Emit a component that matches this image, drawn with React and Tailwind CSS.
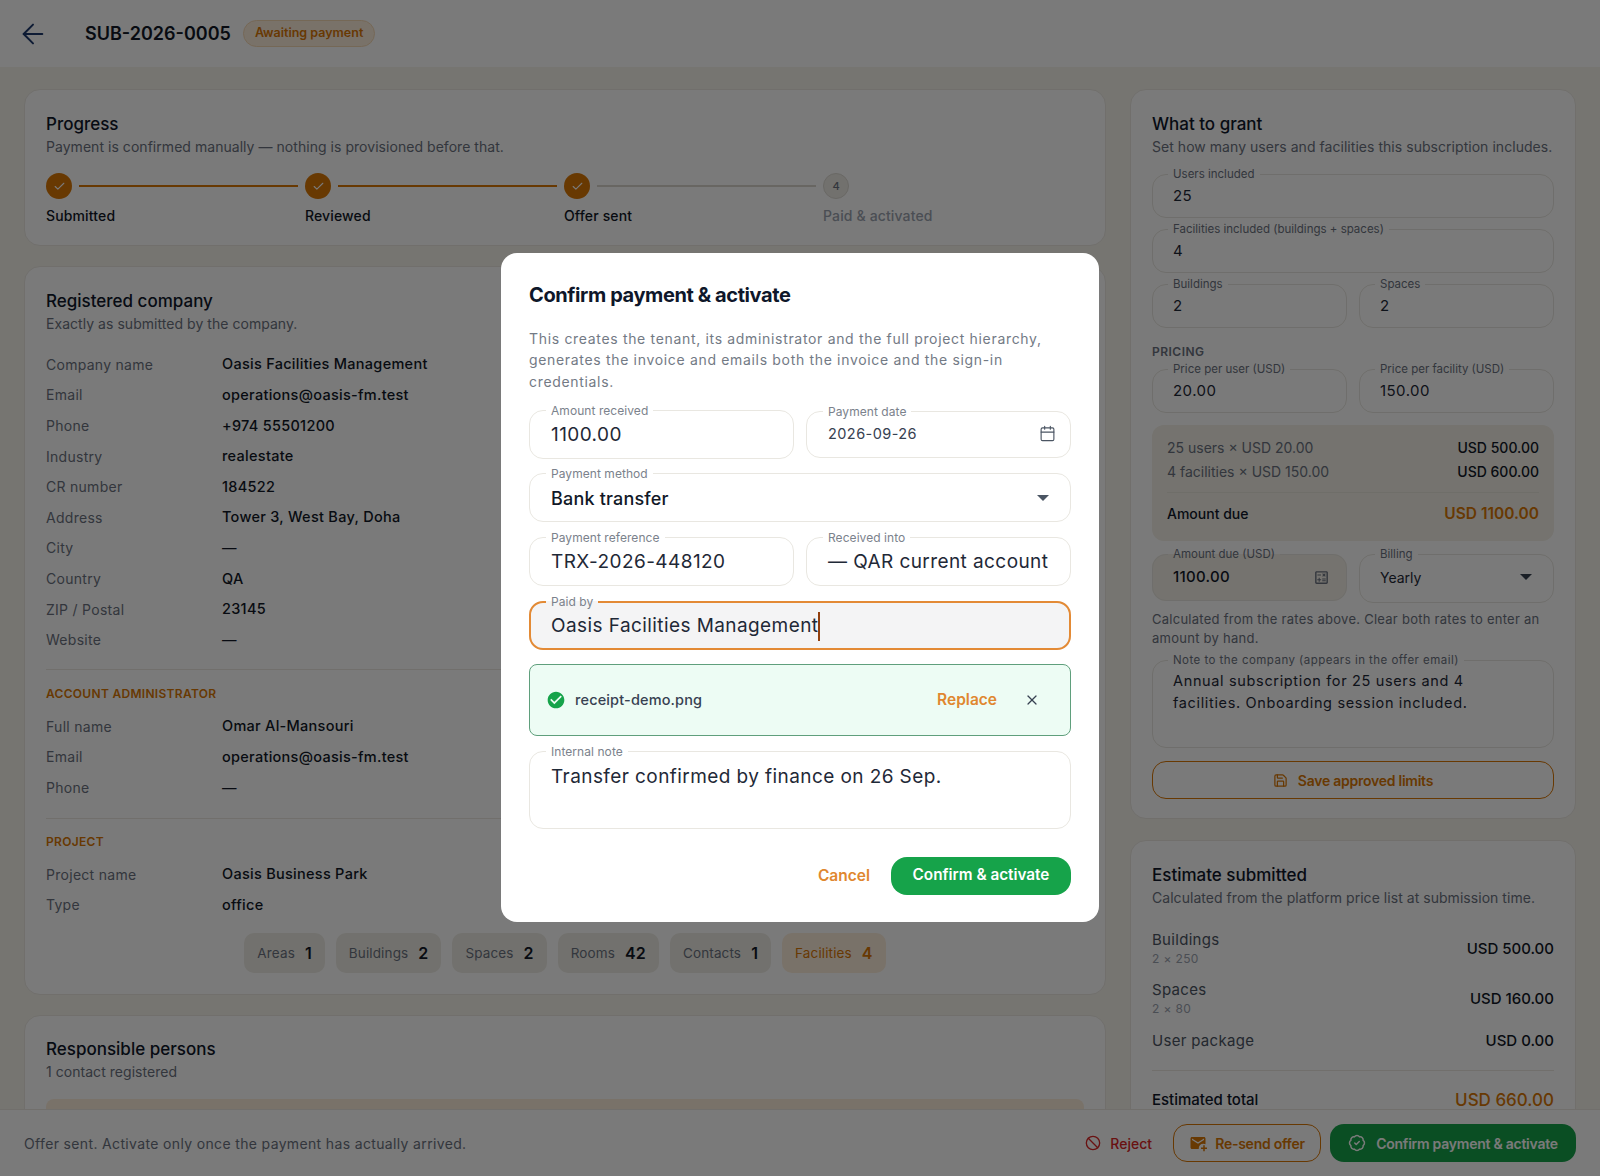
import { ArrowLeft, Ban, BadgeCheck, Calendar, Check, Save, X } from "lucide-react";

const Field = ({ label, children, dim, className = "", legendClass = "" }) => (
  <fieldset className={`border rounded-[14px] min-w-0 pr-[16px] border-[#e9e7e1] ${dim ? "pl-[20px]" : "pl-[21px]"} ${className}`}>
    <legend
      className={`px-[5px] -ml-[5px] leading-none ${dim ? "text-[11.5px] text-[#6b7280]" : "text-[12px] text-[#7b828c] tracking-[0.005em]"} ${legendClass}`}
    >
      {label}
    </legend>
    {children}
  </fieldset>
);

const Caret = ({ className }) => (
  <svg viewBox="0 0 12 6" className={className} fill="currentColor">
    <path d="M0 0h12L6 6z" />
  </svg>
);

const Row = ({ label, value }) => (
  <div className="flex items-center h-[30.6px] text-[14px] tracking-[0.02em]">
    <span className="w-[176px] text-[#6b7280]">{label}</span>
    <span className="text-[14.5px] font-medium text-[#111827]">{value}</span>
  </div>
);

const Card = ({ className = "", children }) => (
  <section className={`rounded-[16px] border border-[#ece9e2] bg-white px-[21px] ${className}`}>{children}</section>
);

const CardHead = ({ title, sub }) => (
  <>
    <h2 className="text-[17px] leading-[22px] font-medium text-[#0f172a]">{title}</h2>
    <p className="text-[14px] leading-[24px] tracking-[0.003em] whitespace-nowrap text-[#6b7280]">{sub}</p>
  </>
);

const Step = ({ n, label, done, last }) => (
  <div className={last ? "" : "w-[259px]"}>
    <div className="flex items-center">
      {done ? (
        <span className="w-[26px] h-[26px] rounded-full bg-[#d97706] flex items-center justify-center text-white">
          <Check className="w-[13px] h-[13px]" strokeWidth={2} />
        </span>
      ) : (
        <span className="w-[26px] h-[26px] rounded-full border border-[#dcd9d2] bg-[#eeece6] flex items-center justify-center text-[11px] font-medium text-[#6b7280]">
          {n}
        </span>
      )}
      {!last && <span className={`ml-[7px] h-[2px] w-[219px] ${done && n < 3 ? "bg-[#d97706]" : "bg-[#d9d6ce]"}`} />}
    </div>
    <div className={`mt-[6px] text-[14px] leading-[21px] font-medium tracking-[0.01em] ${done ? "text-[#111827]" : "text-[#9ca3af]"}`}>{label}</div>
  </div>
);

const Chip = ({ label, n, active }) => (
  <div className={`h-[40px] px-[13px] rounded-[10px] flex items-center gap-[10px] text-[13.5px] tracking-[0.01em] ${active ? "bg-[#fdeedc] text-[#d97706]" : "bg-[#efede6] text-[#6b7280]"}`}>
    <span>{label}</span>
    <span className={`text-[16px] font-semibold ${active ? "text-[#d97706]" : "text-[#111827]"}`}>{n}</span>
  </div>
);

const Price = ({ label, sub, value }) => (
  <div className="flex justify-between items-center">
    <div>
      <div className="text-[15px] leading-[20px] tracking-[0.02em] text-[#4b5563]">{label}</div>
      {sub && <div className="text-[12px] leading-[18px] tracking-[0.03em] text-[#9ca3af]">{sub}</div>}
    </div>
    <div className="text-[15px] font-medium text-[#111827]">{value}</div>
  </div>
);

const SectionLabel = ({ children }) => (
  <div className="text-[12px] leading-[18px] font-semibold tracking-[0.025em] text-[#d97706]">{children}</div>
);

const DimValue = ({ children }) => (
  <div className="text-[15px] leading-[29px] tracking-[0.03em] text-[#1f2937]">{children}</div>
);

const ModalValue = ({ children }) => (
  <div className="text-[19px] leading-[35px] tracking-[0.022em] text-[#1f2937] whitespace-nowrap">{children}</div>
);

export default function App() {
  return (
    <div className="relative h-[1176px] overflow-hidden bg-[#f6f4ed] font-['Inter',sans-serif]">
      <header className="h-[67px] bg-white flex items-center pl-[17px]">
        <ArrowLeft className="w-[32px] h-[32px] text-[#1e3a6e]" strokeWidth={1.5} />
        <h1 className="ml-[36px] text-[18px] font-semibold text-[#111827]">SUB-2026-0005</h1>
        <span className="ml-[12px] -mt-[1px] h-[27px] px-[11px] rounded-full border border-[#f5d9b5] bg-[#fdeedc] flex items-center text-[12.5px] font-semibold text-[#d97706]">
          Awaiting payment
        </span>
      </header>

      <div className="flex gap-[24px] px-[24px] pt-[22px]">
        <main className="w-[1082px] flex flex-col gap-[20px]">
          <Card className="h-[157px] pt-[23px]">
            <CardHead title="Progress" sub="Payment is confirmed manually — nothing is provisioned before that." />
            <div className="flex mt-[14px]">
              <Step n={1} label="Submitted" done />
              <Step n={2} label="Reviewed" done />
              <Step n={3} label="Offer sent" done />
              <Step n={4} label="Paid & activated" last />
            </div>
          </Card>

          <Card className="h-[729px] pt-[23px]">
            <CardHead title="Registered company" sub="Exactly as submitted by the company." />
            <div className="mt-[13px]">
              <Row label="Company name" value="Oasis Facilities Management" />
              <Row label="Email" value="operations@oasis-fm.test" />
              <Row label="Phone" value="+974 55501200" />
              <Row label="Industry" value="realestate" />
              <Row label="CR number" value="184522" />
              <Row label="Address" value="Tower 3, West Bay, Doha" />
              <Row label="City" value="—" />
              <Row label="Country" value="QA" />
              <Row label="ZIP / Postal" value="23145" />
              <Row label="Website" value="—" />
            </div>
            <div className="mt-[14px] border-t border-[#ece9e2] pt-[15px]">
              <SectionLabel>ACCOUNT ADMINISTRATOR</SectionLabel>
              <div className="mt-[8px]">
                <Row label="Full name" value="Omar Al-Mansouri" />
                <Row label="Email" value="operations@oasis-fm.test" />
                <Row label="Phone" value="—" />
              </div>
            </div>
            <div className="mt-[15px] border-t border-[#ece9e2] pt-[14px]">
              <SectionLabel>PROJECT</SectionLabel>
              <div className="mt-[8px]">
                <Row label="Project name" value="Oasis Business Park" />
                <Row label="Type" value="office" />
              </div>
            </div>
            <div className="mt-[13px] flex justify-center gap-[11px]">
              <Chip label="Areas" n="1" />
              <Chip label="Buildings" n="2" />
              <Chip label="Spaces" n="2" />
              <Chip label="Rooms" n="42" />
              <Chip label="Contacts" n="1" />
              <Chip label="Facilities" n="4" active />
            </div>
          </Card>

          <Card className="h-[200px] pt-[22px]">
            <CardHead title="Responsible persons" sub="1 contact registered" />
            <div className="mt-[15px] h-[40px] bg-[#fdeedc] rounded-t-[8px]" />
          </Card>
        </main>

        <aside className="w-[446px] flex flex-col gap-[21px]">
          <Card className="h-[730px] pt-[23px]">
            <CardHead title="What to grant" sub="Set how many users and facilities this subscription includes." />
            <div className="mt-[10px] flex flex-col gap-[6px]">
              <Field dim label="Users included" className="h-[49px]">
                <DimValue>25</DimValue>
              </Field>
              <Field dim label="Facilities included (buildings + spaces)" className="h-[49px]">
                <DimValue>4</DimValue>
              </Field>
              <div className="grid grid-cols-2 gap-[12px]">
                <Field dim label="Buildings" className="h-[49px]">
                  <DimValue>2</DimValue>
                </Field>
                <Field dim label="Spaces" className="h-[49px]">
                  <DimValue>2</DimValue>
                </Field>
              </div>
            </div>
            <div className="mt-[15px] mb-[3px] text-[12px] leading-[18px] font-semibold tracking-[0.04em] text-[#6b7280]">PRICING</div>
            <div className="grid grid-cols-2 gap-[12px]">
              <Field dim label="Price per user (USD)" className="h-[49px]">
                <DimValue>20.00</DimValue>
              </Field>
              <Field dim label="Price per facility (USD)" className="h-[49px]">
                <DimValue>150.00</DimValue>
              </Field>
            </div>
            <div className="mt-[12px] h-[116px] rounded-[12px] bg-[#f4f1e8] px-[15px] pt-[11px]">
              <div className="flex justify-between text-[14px] leading-[24px]">
                <span className="text-[#6b7280]">25 users × USD 20.00</span>
                <span className="font-medium text-[#111827]">USD 500.00</span>
              </div>
              <div className="flex justify-between text-[14px] leading-[24px]">
                <span className="text-[#6b7280]">4 facilities × USD 150.00</span>
                <span className="font-medium text-[#111827]">USD 600.00</span>
              </div>
              <div className="mt-[8px] pt-[9px] border-t border-[#e9e6dc] flex justify-between items-center">
                <span className="text-[14px] font-medium text-[#0f172a]">Amount due</span>
                <span className="text-[15.5px] font-semibold text-[#d97706]">USD 1100.00</span>
              </div>
            </div>
            <div className="mt-[8px] grid grid-cols-2 gap-[12px]">
              <Field dim label="Amount due (USD)" className="h-[52px] bg-[#f4f1e8]">
                <div className="flex justify-between items-center h-[33px]">
                  <span className="text-[15px] font-medium tracking-[0.02em] text-[#111827]">1100.00</span>
                  <svg viewBox="0 0 24 24" className="w-[17px] h-[17px] text-[#6b7280]" fill="currentColor">
                    <path d="M19 3H5c-1.1 0-2 .9-2 2v14c0 1.1.9 2 2 2h14c1.1 0 2-.9 2-2V5c0-1.1-.9-2-2-2zm0 16H5V5h14v14z M6.25 7.72h5v1.5h-5z M13 15.75h5v1.5h-5zm0-2.5h5v1.5h-5z M8 18h1.5v-2h2v-1.5h-2v-2H8v2H6V16h2z M14.09 10.95l1.41-1.41 1.41 1.41 1.06-1.06L16.56 8.5l1.41-1.41-1.06-1.06-1.41 1.41-1.41-1.41-1.06 1.06 1.41 1.41-1.41 1.41z" />
                  </svg>
                </div>
              </Field>
              <Field dim label="Billing" className="h-[54px]">
                <div className="flex justify-between items-center h-[33px] pr-[5px]">
                  <span className="text-[14px] text-[#1f2937]">Yearly</span>
                  <Caret className="w-[12px] h-[6px] text-[#374151]" />
                </div>
              </Field>
            </div>
            <p className="mt-[7px] text-[13px] leading-[19px] tracking-[0.02em] text-[#6b7280]">
              Calculated from the rates above. Clear both rates to enter an amount by hand.
            </p>
            <Field dim label="Note to the company (appears in the offer email)" legendClass="tracking-[0.04em]" className="mt-[7px] h-[93px]">
              <div className="pt-[3px] text-[14.5px] leading-[22px] tracking-[0.045em] text-[#1f2937]">
                Annual subscription for 25 users and 4<br />
                facilities. Onboarding session included.
              </div>
            </Field>
            <button type="button" className="mt-[13px] w-full h-[38px] rounded-[14px] border border-[#d97706] flex items-center justify-center gap-[10px] text-[14px] font-semibold tracking-[-0.018em] text-[#d97706]">
              <Save className="w-[15px] h-[15px]" />
              Save approved limits
            </button>
          </Card>

          <Card className="h-[300px] pt-[23px]">
            <CardHead title="Estimate submitted" sub="Calculated from the platform price list at submission time." />
            <div className="mt-[20px] flex flex-col gap-[12px]">
              <Price label="Buildings" sub="2 × 250" value="USD 500.00" />
              <Price label="Spaces" sub="2 × 80" value="USD 160.00" />
              <Price label="User package" value="USD 0.00" />
            </div>
            <div className="mt-[17px] pt-[17px] border-t border-[#ece9e2] flex justify-between items-center">
              <span className="text-[15px] font-medium text-[#0f172a]">Estimated total</span>
              <span className="text-[17px] font-medium text-[#d97706]">USD 660.00</span>
            </div>
          </Card>
        </aside>
      </div>

      <footer className="absolute left-0 right-0 bottom-0 h-[67px] bg-white border-t border-[#ece9e2] flex items-center px-[24px]">
        <span className="text-[14px] tracking-[0.025em] text-[#6b7280]">Offer sent. Activate only once the payment has actually arrived.</span>
        <div className="ml-auto flex items-center">
          <Ban className="w-[16px] h-[16px] text-[#dc2626]" />
          <span className="ml-[9px] text-[14px] font-medium text-[#dc2626]">Reject</span>
          <button type="button" className="ml-[21px] h-[38px] w-[148px] rounded-[14px] border border-[#d97706] flex items-center justify-center gap-[8px] text-[14px] font-semibold tracking-[-0.018em] text-[#d97706]">
            <svg viewBox="0 0 24 24" className="w-[18px] h-[18px]" fill="currentColor">
              <path d="M20 4H4c-1.1 0-2 .9-2 2v12c0 1.1.9 2 2 2h9.100c-.1-.3-.1-.7-.1-1 0-3.300 2.700-6 6-6 1.100 0 2.100.3 3 .8V6c0-1.100-.9-2-2-2zm0 4-8 5-8-5V6l8 5 8-5v2zm-1 7v3h-3v2h3v3h2v-3h3v-2h-3v-3h-2z" />
            </svg>
            Re-send offer
          </button>
          <button type="button" className="ml-[9px] h-[38px] w-[246px] rounded-[14px] bg-[#16a34a] flex items-center justify-center gap-[10px] text-[14px] font-semibold tracking-[-0.018em] text-white">
            <BadgeCheck className="w-[18px] h-[18px]" />
            Confirm payment &amp; activate
          </button>
        </div>
      </footer>

      <div className="absolute inset-0 bg-black/[0.52] backdrop-blur-[0.5px]" />

      <div role="dialog" className="absolute left-[501px] top-[253px] w-[598px] h-[669px] rounded-[16px] bg-white px-[28px] pt-[28px]">
        <h2 className="text-[20px] leading-[28px] font-bold tracking-[-0.02em] text-[#0f172a]">Confirm payment &amp; activate</h2>
        <p className="mt-[19px] text-[14px] leading-[21.300px] tracking-[0.048em] text-[#737a85]">
          This creates the tenant, its administrator and the full project hierarchy, generates the invoice and emails both the invoice and the sign-in credentials.
        </p>
        <div className="mt-[13px] grid grid-cols-2 gap-[12px]">
          <Field label="Amount received" className="h-[54px]">
            <ModalValue>1100.00</ModalValue>
          </Field>
          <Field label="Payment date" className="h-[52px] mt-[1px]">
            <div className="flex justify-between items-center h-[32px] -mr-[2px]">
              <span className="text-[14.500px] tracking-[0.03em] text-[#374151]">2026-09-26</span>
              <Calendar className="w-[17px] h-[17px] text-[#4b5563]" strokeWidth={1.6} />
            </div>
          </Field>
        </div>
        <Field label="Payment method" className="mt-[9px] h-[54px]">
          <div className="flex justify-between items-center h-[37px] pr-[5px]">
            <span className="text-[18px] font-medium tracking-[0.01em] text-[#111827]">Bank transfer</span>
            <Caret className="w-[12px] h-[6px] text-[#4b5563]" />
          </div>
        </Field>
        <div className="mt-[10px] grid grid-cols-2 gap-[12px]">
          <Field label="Payment reference" className="h-[54px]">
            <ModalValue>TRX-2026-448120</ModalValue>
          </Field>
          <Field label="Received into" className="h-[54px]">
            <ModalValue>— QAR current account</ModalValue>
          </Field>
        </div>
        <Field label="Paid by" className="mt-[10px] h-[54px] bg-[#f4f4f5] !pl-[20px] !border-[#e38a35] border-2">
          <div className="flex items-center h-[37px]">
            <span className="text-[19px] tracking-[0.022em] text-[#1f2937]">Oasis Facilities Management</span>
            <span className="w-[2px] h-[29px] bg-[#92400e]" />
          </div>
        </Field>
        <div className="mt-[14px] h-[72px] rounded-[8px] border-[1.5px] border-[#5f9f7c] bg-[#edfcf4] flex items-center pl-[16px] pr-[30px]">
          <svg viewBox="0 0 24 24" className="w-[20px] h-[20px] text-[#16a34a]" fill="currentColor">
            <path d="M12 2C6.480 2 2 6.480 2 12s4.480 10 10 10 10-4.480 10-10S17.520 2 12 2zm-2 15-5-5 1.410-1.410L10 14.170l7.590-7.590L19 8l-9 9z" />
          </svg>
          <span className="ml-[9px] text-[14.5px] font-medium tracking-[0.01em] text-[#374151]">receipt-demo.png</span>
          <span className="ml-auto text-[15.5px] font-semibold text-[#e0872f]">Replace</span>
          <X className="ml-[27px] w-[16px] h-[16px] text-[#374151]" strokeWidth={1.8} />
        </div>
        <Field label="Internal note" className="mt-[10px] h-[83px]">
          <div className="pt-[5px]">
            <div className="text-[19px] leading-[28px] tracking-[0.022em] text-[#1f2937]">Transfer confirmed by finance on 26 Sep.</div>
          </div>
        </Field>
        <div className="mt-[28px] flex justify-end items-center">
          <span className="text-[15.5px] font-semibold text-[#e0872f]">Cancel</span>
          <button type="button" className="ml-[21px] h-[38px] w-[180px] rounded-[16px] bg-[#16a34a] text-[15.3px] font-semibold text-white">
            Confirm &amp; activate
          </button>
        </div>
      </div>
    </div>
  );
}
